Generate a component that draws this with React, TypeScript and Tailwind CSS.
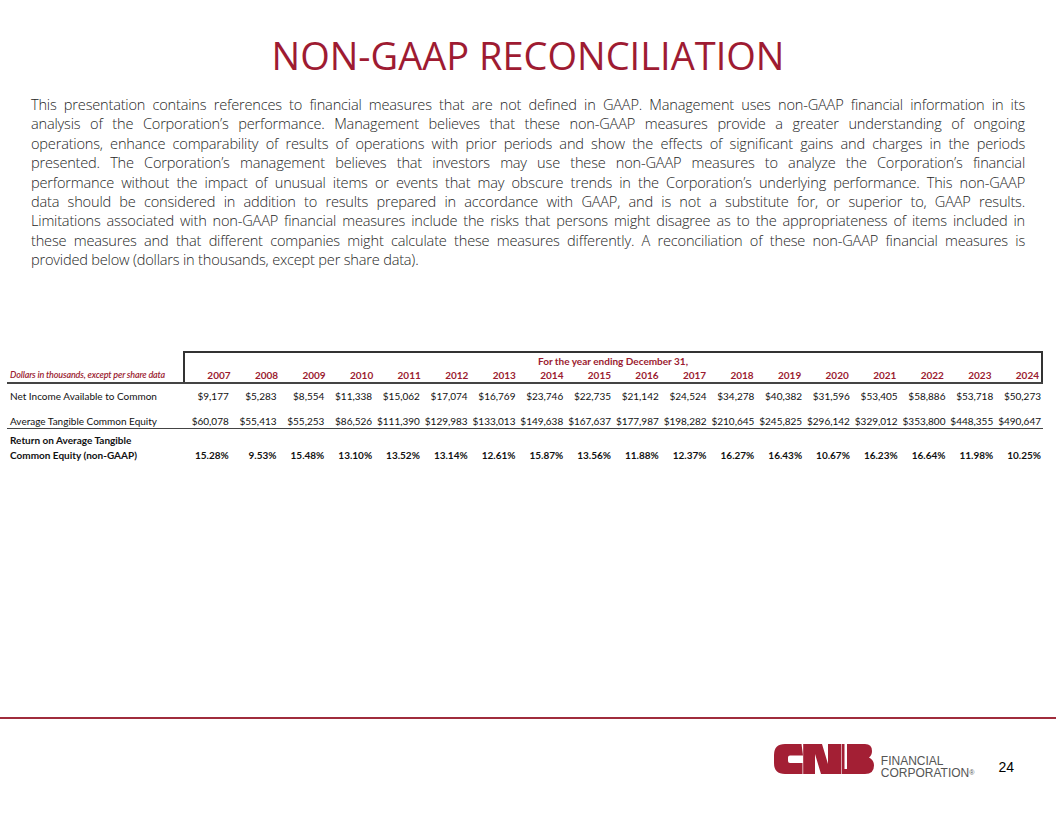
const lines = [
  'This presentation contains references to financial measures that are not defined in GAAP. Management uses non-GAAP financial information in its',
  'analysis of the Corporation’s performance. Management believes that these non-GAAP measures provide a greater understanding of ongoing',
  'operations, enhance comparability of results of operations with prior periods and show the effects of significant gains and charges in the periods',
  'presented. The Corporation’s management believes that investors may use these non-GAAP measures to analyze the Corporation’s financial',
  'performance without the impact of unusual items or events that may obscure trends in the Corporation’s underlying performance. This non-GAAP',
  'data should be considered in addition to results prepared in accordance with GAAP, and is not a substitute for, or superior to, GAAP results.',
  'Limitations associated with non-GAAP financial measures include the risks that persons might disagree as to the appropriateness of items included in',
  'these measures and that different companies might calculate these measures differently. A reconciliation of these non-GAAP financial measures is',
];

const years = [
  '2007', '2008', '2009', '2010', '2011', '2012', '2013', '2014', '2015',
  '2016', '2017', '2018', '2019', '2020', '2021', '2022', '2023', '2024',
];

const netIncome = [
  '$9,177', '$5,283', '$8,554', '$11,338', '$15,062', '$17,074', '$16,769', '$23,746', '$22,735',
  '$21,142', '$24,524', '$34,278', '$40,382', '$31,596', '$53,405', '$58,886', '$53,718', '$50,273',
];

const avgEquity = [
  '$60,078', '$55,413', '$55,253', '$86,526', '$111,390', '$129,983', '$133,013', '$149,638', '$167,637',
  '$177,987', '$198,282', '$210,645', '$245,825', '$296,142', '$329,012', '$353,800', '$448,355', '$490,647',
];

const rotce = [
  '15.28%', '9.53%', '15.48%', '13.10%', '13.52%', '13.14%', '12.61%', '15.87%', '13.56%',
  '11.88%', '12.37%', '16.27%', '16.43%', '10.67%', '16.23%', '16.64%', '11.98%', '10.25%',
];

function CnbMark() {
  return (
    <svg width="100" height="30" viewBox="0 0 100 30" fill="#a31f34">
      {/* C */}
      <path d="M11 0 H27.5 L29 11.5 H16 Q14 11.5 14 13.5 V17 Q14 19 16 19 H28.5 V30 H11 Q0 30 0 19 V11 Q0 0 11 0 Z" />
      {/* N */}
      <path d="M29.2 0 H48 L54 20 V0 H67 V30 H47 L41 10 V30 H29.2 Z" />
      {/* B */}
      <path d="M67.6 0 H70.5 V25 H73 V0 H91 Q98 0 98 7 Q98 11 95 13.5 Q100 16 100 21.5 Q100 30 91 30 H67.6 Z" />
    </svg>
  );
}

export default function App() {
  return (
    <div className="w-[1056px] h-[816px] bg-white flex flex-col overflow-hidden">
      {/* Title */}
      <div className="pt-[36px] text-center leading-[38px] text-[38px] text-[#9e1b32] font-['Open_Sans',sans-serif]">
        NON-GAAP RECONCILIATION
      </div>

      {/* Intro paragraph, line breaks as on the slide */}
      <div className="mt-[21px] px-[31px] text-[14.6px] tracking-[-0.2px] leading-[19.4px] font-light text-[#262626] font-['Open_Sans',sans-serif]">
        {lines.map((l) => (
          <div key={l} className="text-justify [text-align-last:justify]">
            {l}
          </div>
        ))}
        <div>provided below (dollars in thousands, except per share data).</div>
      </div>

      {/* Table */}
      <div className="mt-[81px] ml-[7px] w-[1036px] text-[10px] text-[#111] font-['Lato',sans-serif]">
        <div className="flex border-b-2 border-[#444]">
          <div className="w-[176px] flex items-end pl-[3px] h-[31px] leading-[14px] text-[9px] italic font-semibold tracking-[-0.15px] text-[#9b1b30]">
            Dollars in thousands, except per share data
          </div>
          <div className="flex-1 border-t-2 border-l-2 border-r-2 border-[#333]">
            <div className="h-[16px] leading-[16px] text-center font-bold text-[#9b1b30]">
              For the year ending December 31,
            </div>
            <div className="grid grid-cols-18 h-[13px] leading-[13px] font-bold text-[#9b1b30]">
              {years.map((y) => (
                <div key={y} className="text-right pr-[2px]">
                  {y}
                </div>
              ))}
            </div>
          </div>
        </div>

        <div className="grid grid-cols-[176px_repeat(18,minmax(0,1fr))] h-[24px] items-center leading-[14px]">
          <div className="pl-[3px]">Net Income Available to Common</div>
          {netIncome.map((v, i) => (
            <div key={i} className="text-right pr-[2px]">
              {v}
            </div>
          ))}
        </div>

        <div className="grid grid-cols-[176px_repeat(18,minmax(0,1fr))] h-[21px] items-end leading-[14px] border-b-[1.5px] border-[#444]">
          <div className="pl-[3px]">Average Tangible Common Equity</div>
          {avgEquity.map((v, i) => (
            <div key={i} className="text-right pr-[2px]">
              {v}
            </div>
          ))}
        </div>

        <div className="grid grid-cols-[176px_repeat(18,minmax(0,1fr))] pt-[4px] items-end leading-[15px] font-bold">
          <div className="pl-[3px]">
            Return on Average Tangible
            <br />
            Common Equity (non-GAAP)
          </div>
          {rotce.map((v, i) => (
            <div key={i} className="text-right pr-[2px]">
              {v}
            </div>
          ))}
        </div>
      </div>

      {/* Footer */}
      <div className="mt-auto h-[99px] flex flex-col">
        <div className="h-[2px] bg-[#a02c3c]" />
        <div className="flex justify-end items-start pr-[42px] mt-[25px]">
          <CnbMark />
          <div className="ml-[7px] mt-[11px] text-[12px] leading-[12px] text-[#555] font-['Liberation_Sans',sans-serif]">
            <div>FINANCIAL</div>
            <div>
              CORPORATION<span className="text-[7px] align-top">®</span>
            </div>
          </div>
          <div className="ml-[24px] mt-[16px] text-[14px] leading-[14px] text-black font-['Liberation_Sans',sans-serif]">
            24
          </div>
        </div>
      </div>
    </div>
  );
}
